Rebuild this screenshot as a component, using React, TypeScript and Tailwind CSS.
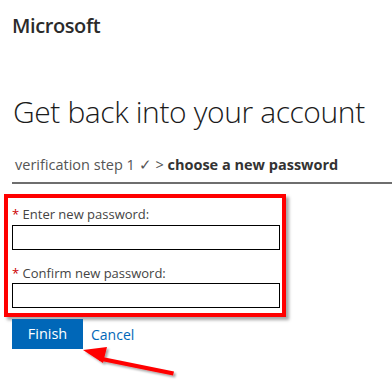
export default function App() {
  return (
    <main
      className="relative h-[384px] w-[392px] overflow-hidden bg-white"
      style={{ fontFamily: '"Open Sans", "Segoe UI", Arial, sans-serif' }}
    >
      <div className="pl-3 pt-[14px]">
        <div className="text-[20px] font-semibold leading-6 tracking-[-0.4px] text-[#2b2b2b]">
          Microsoft
        </div>

        <h1 className="mt-[54px] whitespace-nowrap pl-[1px] text-[30px] font-light leading-10 tracking-[-0.4px] text-[#1b1b1b]">
          Get back into your account
        </h1>

        <div className="mt-[23px] whitespace-nowrap pl-[3px] text-[14.5px] leading-5 text-[#555]">
          verification step 1 ✓ &gt; <span className="font-bold text-[#333]">choose a new password</span>
        </div>

        <div className="mt-[7px] h-[2px] bg-[#6e6e6e]" />
      </div>

      <div className="ml-1 mt-[10px] w-[282px] border-4 border-[#ff0000] pb-[5px] pl-1 pr-[1px] pt-2 shadow-[3px_3px_3px_rgba(0,0,0,0.35)]">
        <label className="block text-[13px] leading-4 text-[#444]">
          <span className="text-[#c00]">*</span> Enter new password:
        </label>
        <div className="mt-[3px] h-[25px] w-[268px] border border-black bg-white" />
        <label className="mt-[15px] block text-[13px] leading-4 text-[#444]">
          <span className="text-[#c00]">*</span> Confirm new password:
        </label>
        <div className="mt-[2px] h-[25px] w-[268px] border border-black bg-white" />
      </div>

      <div className="mt-[2px] flex items-center gap-2 pl-3">
        <button className="h-[30px] w-[71px] bg-[#0067b8] text-[14.5px] text-white">Finish</button>
        <a className="text-[14px] text-[#0067b8]">Cancel</a>
      </div>

      <svg className="absolute left-0 top-0" width="392" height="384" viewBox="0 0 392 384">
        <defs>
          <filter id="sh" x="-20%" y="-20%" width="140%" height="140%">
            <feDropShadow dx="2" dy="2" stdDeviation="1.2" floodColor="#000" floodOpacity="0.35" />
          </filter>
        </defs>
        <g filter="url(#sh)" fill="#ff0000" stroke="none">
          <polygon points="100,356.5 174,371.5 173,375.5 99,360.5" />
          <polygon points="83,350 107,347 103,363" />
        </g>
      </svg>
    </main>
  );
}
